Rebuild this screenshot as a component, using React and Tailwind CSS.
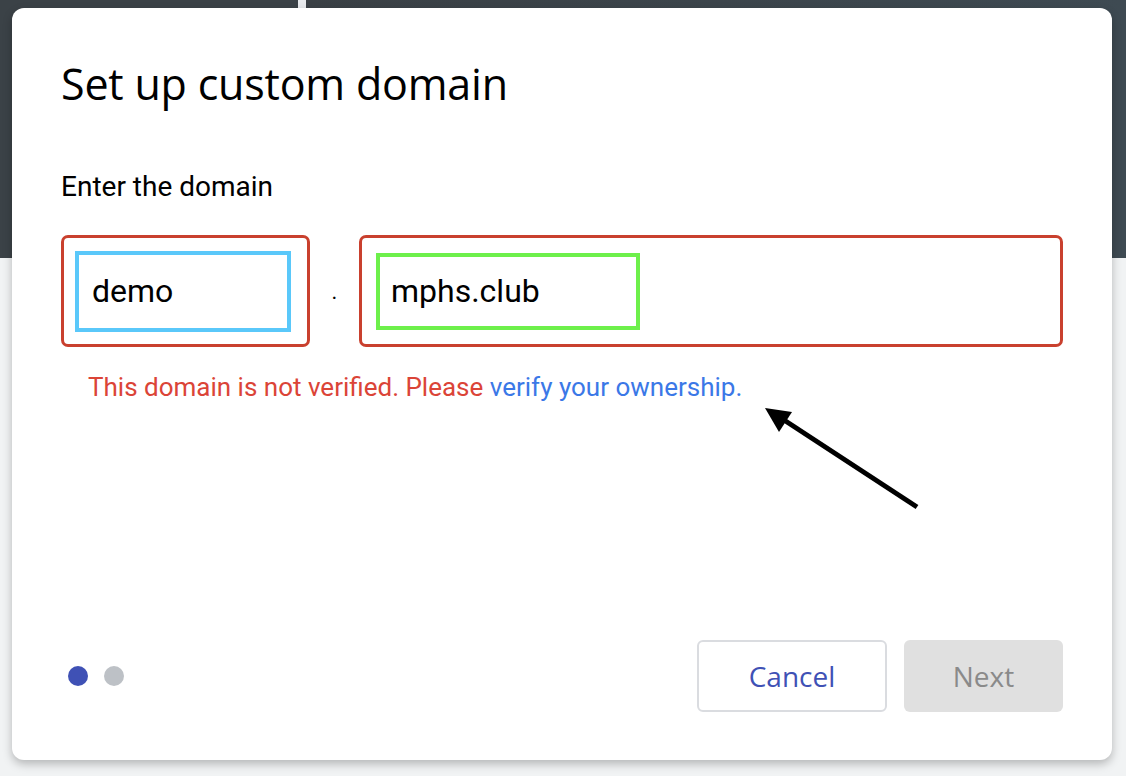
import React from "react";

export default function App() {
  return (
    <div className="relative w-[1126px] h-[776px] overflow-hidden bg-[#f1f3f4]" style={{ fontFamily: "Roboto, 'Liberation Sans', sans-serif" }}>
      {/* page behind the dialog */}
      <div className="flex h-[258px] bg-[#3b4247]">
        <div className="w-[298px]" />
        <div className="w-[8px] h-[10px] bg-[#e8eaed]" />
        <div className="flex-1 bg-gradient-to-r from-[#3a4045] to-[#3e4a52]" />
      </div>

      {/* dialog */}
      <div className="absolute left-[12px] top-[8px] w-[1100px] h-[752px] bg-white rounded-[12px] shadow-[0_4px_10px_rgba(0,0,0,0.25)] flex flex-col px-[49px]">
        <h1 className="mt-[49px] text-[43px] leading-[54px] text-black tracking-[-0.2px]" style={{ fontFamily: "'Open Sans', sans-serif" }}>
          Set up custom domain
        </h1>

        <div className="mt-[59px] text-[28px] leading-[34px] text-black">Enter the domain</div>

        <div className="mt-[31px] flex items-center">
          <div className="w-[249px] h-[112px] border-[3px] border-[#c9402e] rounded-[7px] flex items-center pl-[11px]">
            <div className="w-[216px] h-[81px] border-[4px] border-[#5ac8fa] flex items-center pl-[13px] text-[32px] text-black">
              demo
            </div>
          </div>
          <div className="w-[49px] text-center text-[22px] text-black">.</div>
          <div className="flex-1 h-[112px] border-[3px] border-[#c9402e] rounded-[7px] flex items-center pl-[14px]">
            <div className="w-[264px] h-[77px] border-[4px] border-[#6df04b] flex items-center pl-[11px] text-[32px] text-black">
              mphs.club
            </div>
          </div>
        </div>

        <div className="mt-[24px] ml-[27px] text-[26px] leading-[32px] text-[#db4437]">
          This domain is not verified. Please <span className="text-[#3b78e7]">verify your ownership.</span>
        </div>

        <div className="flex-1" />

        <div className="flex items-center mb-[48px]">
          <div className="flex gap-[16px] ml-[7px]">
            <div className="w-[20px] h-[20px] rounded-full bg-[#3f51b5]" />
            <div className="w-[20px] h-[20px] rounded-full bg-[#bdc1c6]" />
          </div>
          <div className="flex-1" />
          <button className="w-[190px] h-[72px] rounded-[6px] border-[2px] border-[#dadce0] bg-white text-[#3f51b5] text-[28px] font-medium" style={{ fontFamily: "'Open Sans', sans-serif" }}>
            Cancel
          </button>
          <button className="ml-[17px] w-[159px] h-[72px] rounded-[6px] bg-[#e0e0e0] text-[#8a8a8a] text-[28px] font-medium" style={{ fontFamily: "'Open Sans', sans-serif" }}>
            Next
          </button>
        </div>
      </div>

      {/* annotation arrow */}
      <svg className="absolute left-0 top-0 pointer-events-none" width="1126" height="776">
        <line x1="917" y1="507" x2="784" y2="420" stroke="black" strokeWidth="5" />
        <polygon points="765,408 792,412 779,432" fill="black" />
      </svg>
    </div>
  );
}
